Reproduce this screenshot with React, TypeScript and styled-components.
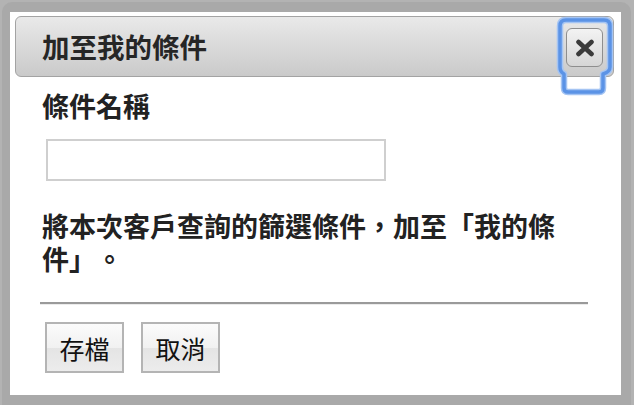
import styled, { createGlobalStyle } from "styled-components";

const Global = createGlobalStyle`
  html, body {
    margin: 0;
    padding: 0;
    background: #b3b3b3;
    width: 634px;
    height: 405px;
    overflow: hidden;
  }
  * { box-sizing: border-box; }
`;

const Frame = styled.div`
  margin: 2px 3px 0 2px;
  padding: 10px 10px 12px 8px;
  background: #a9a9a9;
  border-radius: 10px 10px 0 0;
`;

const Dialog = styled.div`
  position: relative;
  background: #fff;
  padding: 4px 7px 22px 5px;
  font-family: "Noto Sans CJK TC", "Noto Sans", sans-serif;
  color: #222;
  text-spacing-trim: space-all;
`;

const Header = styled.div`
  height: 61px;
  display: flex;
  align-items: center;
  padding-left: 26px;
  border: 1px solid #a3a3a3;
  border-radius: 6px;
  background: linear-gradient(#e9e9e9, #cacaca);
`;

const Title = styled.h2`
  margin: 0;
  font-size: 27.5px;
  font-weight: 700;
  line-height: 1;
  color: #262626;
`;

const CloseBtn = styled.button`
  position: absolute;
  left: 556px;
  top: 16px;
  width: 37px;
  height: 39px;
  padding: 0;
  border: 1px solid #8e8e8e;
  border-radius: 6px;
  background: linear-gradient(#f3f3f3, #d6d6d6);
  display: flex;
  align-items: center;
  justify-content: center;
  cursor: pointer;
`;

const FocusRing = styled.svg`
  position: absolute;
  left: 0;
  top: 0;
  pointer-events: none;
  overflow: visible;
`;

const Body = styled.div`
  padding: 12px 26px 0 27px;
`;

const Label = styled.div`
  font-size: 27px;
  font-weight: 700;
  line-height: 34px;
`;

const NameInput = styled.input`
  display: block;
  margin: 16px 0 0 4px;
  width: 340px;
  height: 42px;
  border: 2px solid #cfcfcf;
  background: #fff;
  outline: none;
`;

const Note = styled.p`
  margin: 28px 0 0;
  width: 548px;
  font-size: 27px;
  font-weight: 700;
  line-height: 33px;
`;

const Divider = styled.hr`
  margin: 27px 0 0 -2px;
  width: 548px;
  height: 2px;
  border: 0;
  border-top: 2px solid #9a9a9a;
  border-bottom: 1px solid #ececec;
`;

const Actions = styled.div`
  display: flex;
  gap: 17px;
  margin: 17px 0 0 3px;
`;

const Btn = styled.button`
  width: 79px;
  height: 51px;
  padding: 0;
  border: 2px solid #b4b4b4;
  background: linear-gradient(#fbfbfb 0%, #f1f1f1 50%, #e4e4e4 51%, #ececec 100%);
  font-family: "Noto Sans CJK TC", "Noto Sans", sans-serif;
  font-size: 25px;
  color: #111;
  cursor: pointer;
`;

const ringPath =
  "M556 8 H594 Q600 8 600 14 V55 Q600 60 593 62 V76 Q593 80 589 80 H558 Q554 80 554 76 V62 Q550 60 550 55 V14 Q550 8 556 8 Z";

export default function App() {
  return (
    <>
      <Global />
      <Frame>
        <Dialog>
          <Header>
            <Title>加至我的條件</Title>
          </Header>
          <CloseBtn aria-label="close">
            <svg width="20" height="18" viewBox="0 0 20 18">
              <path d="M3.5 3 L16.5 15 M16.5 3 L3.5 15" stroke="#3a3a3a" strokeWidth="4.6" strokeLinecap="round" />
            </svg>
          </CloseBtn>
          <FocusRing width="620" height="100">
            <path d={ringPath} fill="none" stroke="#a4c4f3" strokeWidth="6.5" strokeLinejoin="round" />
            <path d={ringPath} fill="none" stroke="#5b93e6" strokeWidth="3.5" strokeLinejoin="round" />
          </FocusRing>
          <Body>
            <Label>條件名稱</Label>
            <NameInput type="text" />
            <Note>將本次客戶查詢的篩選條件，加至「我的條件」。</Note>
            <Divider />
            <Actions>
              <Btn>存檔</Btn>
              <Btn>取消</Btn>
            </Actions>
          </Body>
        </Dialog>
      </Frame>
    </>
  );
}
